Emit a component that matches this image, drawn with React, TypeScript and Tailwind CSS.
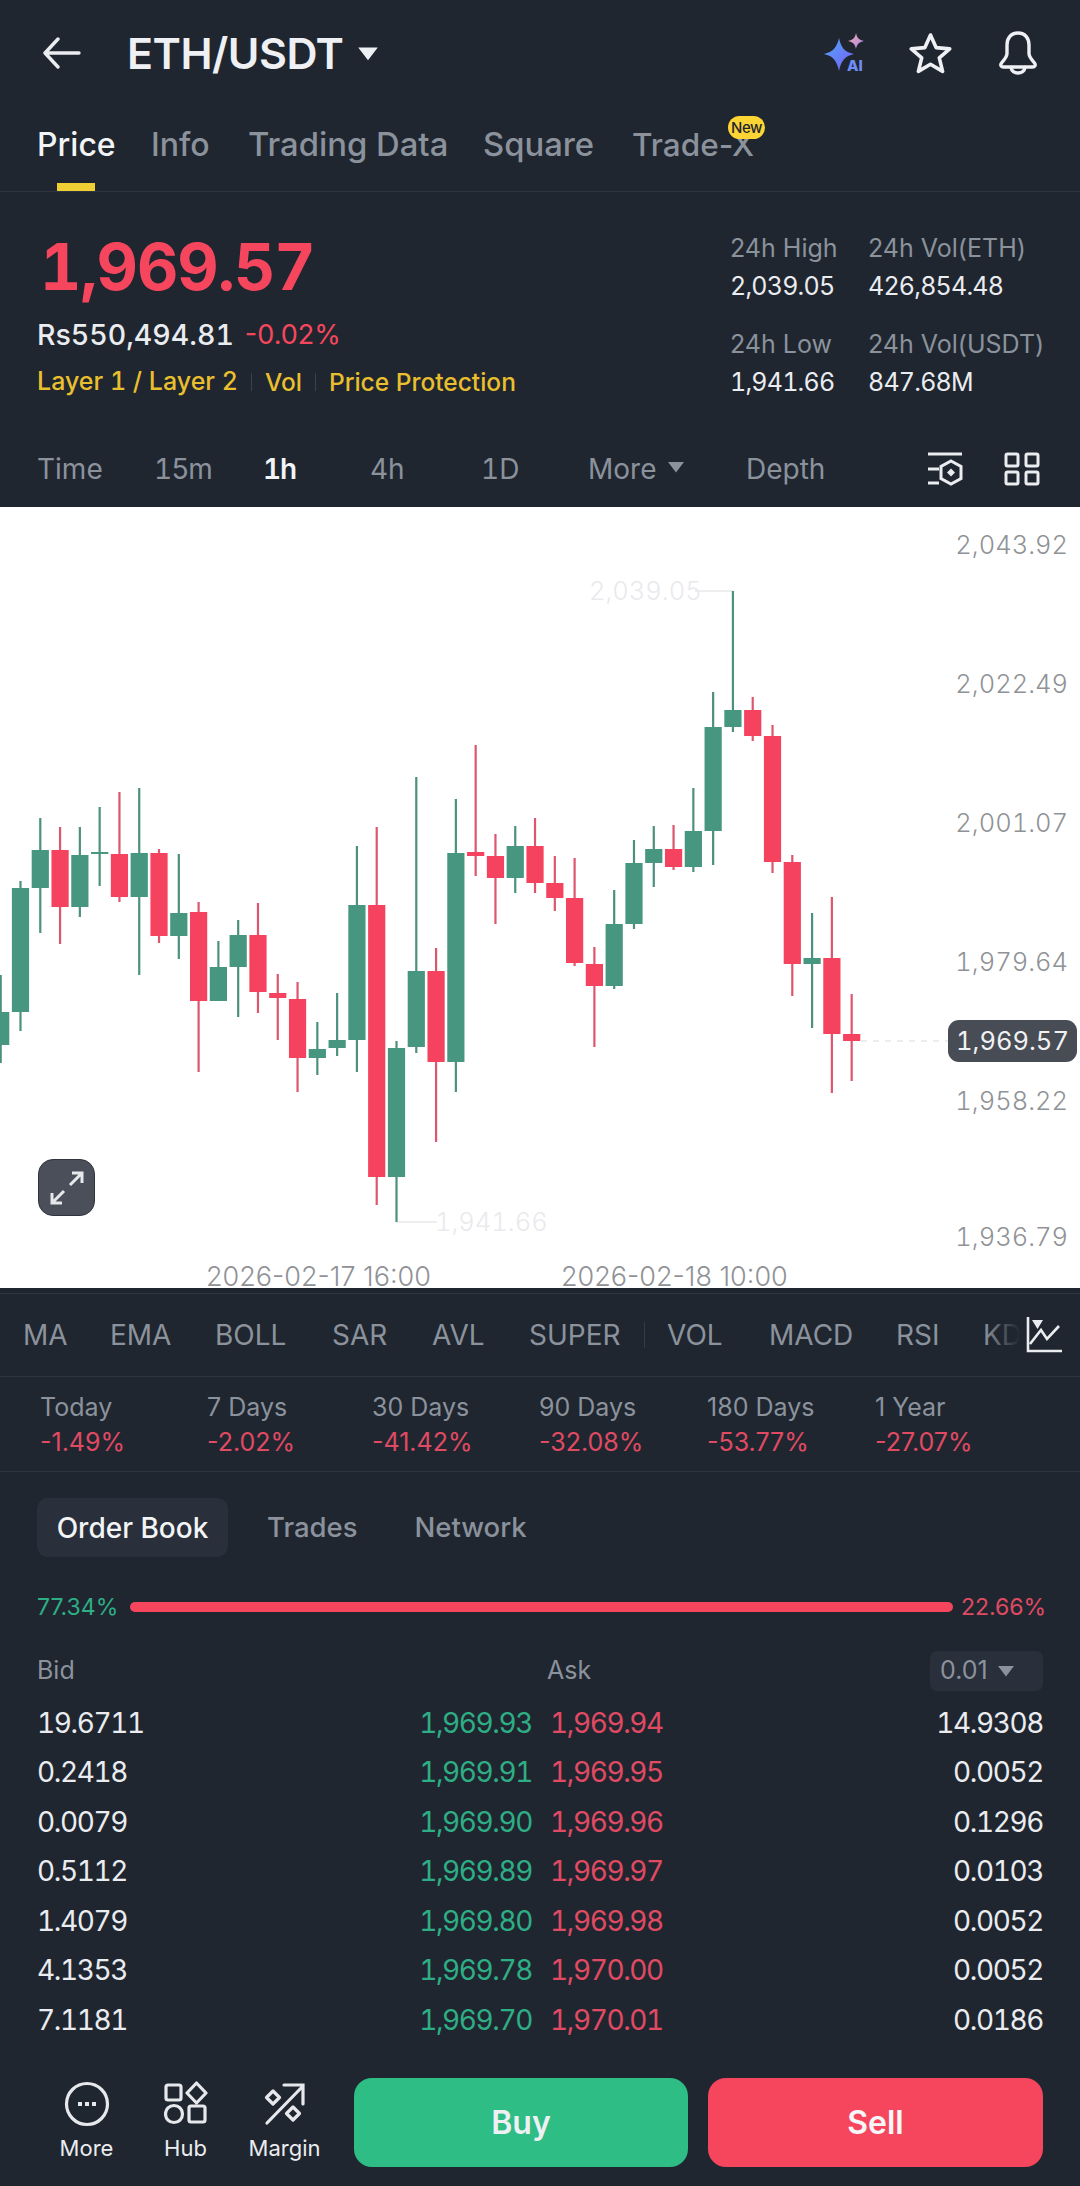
import React from "react";

type C = [string, number, number, number, number];
const candles: C[] = [
  ["g", 975, 1012, 1045, 1063],
  ["g", 881, 888, 1012, 1031],
  ["g", 818, 850, 888, 933],
  ["r", 827, 850, 907, 944],
  ["g", 827, 855, 907, 917],
  ["g", 807, 852, 854, 886],
  ["r", 792, 854, 897, 902],
  ["g", 788, 853, 897, 975],
  ["r", 849, 853, 936, 943],
  ["g", 854, 913, 936, 959],
  ["r", 902, 912, 1001, 1072],
  ["g", 941, 967, 1001, 1001],
  ["g", 920, 935, 967, 1017],
  ["r", 903, 935, 992, 1013],
  ["r", 974, 993, 998, 1040],
  ["r", 982, 999, 1058, 1092],
  ["g", 1022, 1049, 1058, 1075],
  ["g", 993, 1040, 1048, 1056],
  ["g", 846, 905, 1040, 1072],
  ["r", 827, 905, 1177, 1205],
  ["g", 1041, 1048, 1177, 1222],
  ["g", 777, 971, 1047, 1053],
  ["r", 948, 971, 1062, 1142],
  ["g", 799, 853, 1062, 1092],
  ["r", 745, 852, 856, 876],
  ["r", 834, 856, 878, 924],
  ["g", 826, 846, 878, 893],
  ["r", 818, 846, 883, 893],
  ["r", 856, 883, 898, 911],
  ["r", 858, 898, 963, 966],
  ["r", 947, 964, 986, 1047],
  ["g", 890, 924, 986, 989],
  ["g", 840, 863, 924, 929],
  ["g", 826, 849, 863, 887],
  ["r", 825, 849, 867, 870],
  ["g", 788, 831, 867, 872],
  ["g", 692, 727, 831, 865],
  ["g", 591, 710, 727, 732],
  ["r", 697, 710, 736, 741],
  ["r", 725, 736, 862, 873],
  ["r", 855, 862, 964, 996],
  ["g", 913, 958, 964, 1028],
  ["r", 897, 958, 1034, 1093],
  ["r", 994, 1034, 1041, 1081],
];

const CHART_TOP = 507;

function Chart() {
  return (
    <svg className="absolute inset-0" width="1080" height="781" viewBox={`0 ${CHART_TOP} 1080 781`}>
      <line x1="695" y1="591" x2="733" y2="591" stroke="#e6e8eb" strokeWidth="1.5" />
      <line x1="397" y1="1222" x2="437" y2="1222" stroke="#e6e8eb" strokeWidth="1.5" />
      <line x1="861" y1="1041" x2="948" y2="1041" stroke="#e6e8eb" strokeWidth="1.5" strokeDasharray="6 6" />
      {candles.map(([k, wt, bt, bb, wb], i) => {
        const x = 0.7 + i * 19.79;
        const wick = k === "g" ? "#4c917d" : "#dd566e";
        const body = k === "g" ? "#47967f" : "#f5425f";
        return (
          <g key={i}>
            <rect x={x - 1.1} y={wt} width="2.2" height={wb - wt} fill={wick} />
            <rect x={x - 8.6} y={bt} width="17.2" height={bb - bt} fill={body} />
          </g>
        );
      })}
    </svg>
  );
}

const axis: [string, string][] = [
  ["2,043.92", "top-[22px]"],
  ["2,022.49", "top-[161px]"],
  ["2,001.07", "top-[300px]"],
  ["1,979.64", "top-[439px]"],
  ["1,958.22", "top-[578px]"],
  ["1,936.79", "top-[714px]"],
];

const bookRows = [
  ["19.6711", "1,969.93", "1,969.94", "14.9308"],
  ["0.2418", "1,969.91", "1,969.95", "0.0052"],
  ["0.0079", "1,969.90", "1,969.96", "0.1296"],
  ["0.5112", "1,969.89", "1,969.97", "0.0103"],
  ["1.4079", "1,969.80", "1,969.98", "0.0052"],
  ["4.1353", "1,969.78", "1,970.00", "0.0052"],
  ["7.1181", "1,969.70", "1,970.01", "0.0186"],
];

const perf = [
  ["Today", "-1.49%", "w-[167px]"],
  ["7 Days", "-2.02%", "w-[165px]"],
  ["30 Days", "-41.42%", "w-[167px]"],
  ["90 Days", "-32.08%", "w-[168px]"],
  ["180 Days", "-53.77%", "w-[168px]"],
  ["1 Year", "-27.07%", "w-[160px]"],
];

const indicators = [
  ["MA", "w-[87px]"],
  ["EMA", "w-[105px]"],
  ["BOLL", "w-[117px]"],
  ["SAR", "w-[100px]"],
  ["AVL", "w-[97px]"],
  ["SUPER", "w-[115px]"],
];
const indicators2 = [
  ["VOL", "w-[102px]"],
  ["MACD", "w-[127px]"],
  ["RSI", "w-[87px]"],
  ["KDJ", "w-[60px]"],
];

function Tri({ className }: { className: string }) {
  return (
    <svg className={className} viewBox="0 0 18 12" fill="currentColor">
      <path d="M1 1h16L9 11.5z" strokeLinejoin="round" />
    </svg>
  );
}

export default function App() {
  return (
    <div className="w-[1080px] h-[2186px] overflow-hidden bg-[#1f2630] text-[#eaecef] font-['Inter','Noto_Sans',sans-serif]">
      {/* header */}
      <div className="h-[106px] flex items-center pl-[43px] pr-[42px]">
        <svg width="38" height="32" viewBox="0 0 38 32" fill="none" stroke="#eaecef" strokeWidth="3.4" strokeLinecap="round" strokeLinejoin="round">
          <path d="M36 16H3M15 2L2 16l13 14" />
        </svg>
        <span className="ml-[46px] text-[43px] font-semibold tracking-[-0.5px] text-[#eef0f3]">ETH/USDT</span>
        <Tri className="ml-[14px] w-[22px] h-[15px] text-[#eef0f3]" />
        <svg className="ml-auto" width="44" height="42" viewBox="-3 0 44 42">
          <defs>
            <linearGradient id="aiA" x1="0" y1="0" x2="1" y2="1">
              <stop offset="0" stopColor="#4fa8f8" />
              <stop offset="1" stopColor="#7a5cf5" />
            </linearGradient>
            <linearGradient id="aiB" x1="0" y1="0" x2="1" y2="1">
              <stop offset="0" stopColor="#f2a9a8" />
              <stop offset="1" stopColor="#a98af2" />
            </linearGradient>
          </defs>
          <path d="M16 6c2 9 5 14 15 16-9 2-13 7-15 17-2-10-6-15-15-17 9-2 13-7 15-16z" fill="url(#aiA)" />
          <path d="M33 1c1 5 3 7 8 8-5 1-7 3-8 8-1-5-3-7-8-8 5-1 7-3 8-8z" fill="url(#aiB)" />
          <text x="24" y="39" fontSize="15" fontWeight="800" fill="#6f8df5" fontFamily="Inter">AI</text>
        </svg>
        <svg className="ml-[45px]" width="43" height="42" viewBox="0 0 43 42" fill="none" stroke="#eef0f3" strokeWidth="3.6" strokeLinejoin="round">
          <path d="M21.5 3l5.6 12.6 13.6 1.3-10.4 9 3.3 13.5-12.1-7.2-12.1 7.2 3.3-13.5-10.4-9 13.6-1.3z" />
        </svg>
        <svg className="ml-[46px]" width="40" height="44" viewBox="0 0 40 44" fill="none" stroke="#eef0f3" strokeWidth="3.4" strokeLinejoin="round" strokeLinecap="round">
          <path d="M20 2c-7.500 0-11 5.600-11 12v8.500c0 3-2 5.500-5.500 9.500-1.500 2-.5 4 2 4h29c2.500 0 3.500-2 2-4-3.500-4-5.500-6.500-5.500-9.500V14c0-6.400-3.500-12-11-12z" />
          <path d="M13 36.500c.5 3.500 3.500 5.500 7 5.500s6.500-2 7-5.500" />
        </svg>
      </div>

      {/* tabs */}
      <div className="h-[86px] border-b border-[#2f3640] relative">
        <div className="flex items-center h-[78px] pl-[37px] text-[32px] font-medium text-[#8b929c]">
          <span className="w-[114px] text-[#f3f4f6]">Price</span>
          <span className="w-[97px]">Info</span>
          <span className="w-[235px] text-[32.8px]">Trading Data</span>
          <span className="w-[149px] text-[32.8px]">Square</span>
          <span className="relative text-[31.5px]">
            Trade-X
            <span className="absolute left-[96px] -top-[5px] w-[37px] h-[23px] rounded-full bg-[#fcd535] text-[#1f2630] text-[15px] font-medium flex items-center justify-center tracking-[-0.5px]">New</span>
          </span>
        </div>
        <div className="absolute left-[57px] bottom-0 w-[38px] h-[8px] bg-[#f0cf35]" />
      </div>

      {/* stats */}
      <div className="h-[239px] px-[37px] flex justify-between">
        <div className="pt-[43px]">
          <div className="ml-[3px] h-[64px] leading-[64px] text-[64px] font-bold tabular-nums tracking-[-1px] text-[#f6465d]">1,969.57</div>
          <div className="mt-[16px] h-[40px] flex items-center text-[28.5px]">
            <span className="font-medium tabular-nums">Rs550,494.81</span>
            <span className="ml-[11px] text-[27px] text-[#f6465d]">-0.02%</span>
          </div>
          <div className="mt-[7px] h-[40px] flex items-center text-[24.5px] font-medium text-[#e9bf2e]">
            <span className="text-[25px] tabular-nums">Layer 1 / Layer 2</span>
            <span className="mx-[13px] w-px h-[18px] bg-[#3a414c]" />
            <span>Vol</span>
            <span className="mx-[13px] w-px h-[18px] bg-[#3a414c]" />
            <span>Price Protection</span>
          </div>
        </div>
        <div className="flex pt-[38px] text-[25px]">
          <div className="w-[138px]">
            <div className="h-[36px] leading-[36px] text-[#8b929c]">24h High</div>
            <div className="mt-[2px] h-[36px] leading-[36px] tabular-nums tracking-[-0.8px]">2,039.05</div>
            <div className="mt-[22px] h-[36px] leading-[36px] text-[#8b929c]">24h Low</div>
            <div className="mt-[2px] h-[36px] leading-[36px] tabular-nums tracking-[-0.8px]">1,941.66</div>
          </div>
          <div className="w-[175px] whitespace-nowrap">
            <div className="h-[36px] leading-[36px] text-[#8b929c]">24h Vol(ETH)</div>
            <div className="mt-[2px] h-[36px] leading-[36px] tabular-nums tracking-[-0.8px]">426,854.48</div>
            <div className="mt-[22px] h-[36px] leading-[36px] text-[#8b929c]">24h Vol(USDT)</div>
            <div className="mt-[2px] h-[36px] leading-[36px] tabular-nums tracking-[-0.8px]">847.68M</div>
          </div>
        </div>
      </div>

      {/* timeframe */}
      <div className="h-[76px] flex items-center pl-[37px] pr-[40px] text-[28px] text-[#8b929c]">
        <span className="w-[117px]">Time</span>
        <span className="w-[109px] tabular-nums tracking-[-1px]">15m</span>
        <span className="w-[107px] font-semibold tabular-nums tracking-[-1px] text-[#f3f4f6]">1h</span>
        <span className="w-[111px]">4h</span>
        <span className="w-[107px] tabular-nums">1D</span>
        <span className="w-[158px] flex items-center">
          More
          <Tri className="ml-[11px] w-[18px] h-[12px] -mt-[4px]" />
        </span>
        <span>Depth</span>
        <svg className="ml-auto" width="36" height="34" viewBox="0 0 36 34" fill="none" stroke="#eaecef" strokeWidth="3">
          <path d="M1 2h34M1 17h11M1 31h11" />
          <path d="M24 9l10 5.500v12L24 32l-10-5.500v-12z" />
          <path d="M24 16.500l4 4-4 4-4-4z" fill="#eaecef" stroke="none" />
        </svg>
        <svg className="ml-[41px]" width="36" height="34" viewBox="0 0 36 34" fill="none" stroke="#eaecef" strokeWidth="3">
          <rect x="2" y="2" width="12" height="12" rx="1.500" />
          <rect x="22" y="2" width="12" height="12" rx="1.500" />
          <rect x="2" y="20" width="12" height="12" rx="1.500" />
          <rect x="22" y="20" width="12" height="12" rx="1.500" />
        </svg>
      </div>

      {/* chart */}
      <div className="relative h-[781px] bg-white overflow-hidden text-[25.5px] tabular-nums text-[#8f9296] font-light">
        <Chart />
        {axis.map(([t, pos]) => (
          <div key={t} className={`absolute right-[12px] h-[32px] leading-[32px] ${pos}`}>{t}</div>
        ))}
        <div className="absolute left-[589px] top-[68px] h-[32px] leading-[32px] text-[#e8eaed]">2,039.05</div>
        <div className="absolute left-[435px] top-[699px] h-[32px] leading-[32px] text-[#e8eaed]">1,941.66</div>
        <div className="absolute left-[206px] top-[759px] h-[22px] leading-[22px] text-[27px] [font-variant-numeric:normal]">2026-02-17 16:00</div>
        <div className="absolute left-[561px] top-[759px] h-[22px] leading-[22px] text-[27px] [font-variant-numeric:normal]">2026-02-18 10:00</div>
        <div className="absolute left-[948px] top-[513px] w-[129px] h-[42px] rounded-[11px] bg-[#474c55] text-[#f0f1f3] font-normal flex items-center justify-center">1,969.57</div>
        <div className="absolute left-[38px] top-[652px] w-[57px] h-[57px] rounded-[15px] bg-[#4a4f59] border border-[#30343c] flex items-center justify-center">
          <svg width="36" height="36" viewBox="0 0 36 36" fill="none" stroke="#e6e8ec" strokeWidth="3">
            <path d="M21 15L33 3M23 3h10v10M15 21L3 33M13 33H3V23" />
          </svg>
        </div>
      </div>

      {/* indicators */}
      <div className="h-[5px]" />
      <div className="h-[84px] border-y border-[#2f3640] flex items-center text-[28px] text-[#8b929c]">
        <div className="relative w-[1020px] overflow-hidden pl-[23px] flex items-center whitespace-nowrap">
          {indicators.map(([t, w]) => (
            <span key={t} className={`shrink-0 ${w}`}>{t}</span>
          ))}
          <span className="shrink-0 w-px h-[26px] bg-[#343b46] mr-[22px]" />
          {indicators2.map(([t, w]) => (
            <span key={t} className={`shrink-0 ${w}`}>{t}</span>
          ))}
          <span className="absolute right-0 top-0 bottom-0 w-[36px] bg-gradient-to-r from-transparent to-[#1f2630]" />
        </div>
        <svg className="ml-[6px]" width="36" height="36" viewBox="0 0 36 36" fill="none" stroke="#eaecef" strokeWidth="2.6">
          <path d="M2 0v34h34" />
          <path d="M4 27l11-14 6 9 12-13" />
          <path d="M6 3h11l-5.500 9z" fill="#eaecef" stroke="none" />
        </svg>
      </div>

      {/* performance */}
      <div className="h-[95px] border-b border-[#2f3640] pl-[40px] pt-[12px] flex text-[25px]">
        {perf.map(([a, b, w]) => (
          <div key={a} className={w}>
            <div className="h-[36px] leading-[36px] text-[#8b929c]">{a}</div>
            <div className="h-[35px] leading-[35px] text-[#e04a63]">{b}</div>
          </div>
        ))}
      </div>

      {/* order book tabs */}
      <div className="mt-[26px] ml-[37px] flex items-center h-[59px] text-[28px] font-medium text-[#8b929c]">
        <span className="w-[191px] h-[59px] rounded-[11px] bg-[#292f3b] text-[#f3f4f6] flex items-center justify-center">Order Book</span>
        <span className="ml-[39px] text-[27.5px]">Trades</span>
        <span className="ml-[57px] text-[27.5px]">Network</span>
      </div>

      {/* ratio */}
      <div className="mt-[35px] h-[30px] px-[37px] flex items-center text-[23px] whitespace-nowrap">
        <span className="shrink-0 text-[#2eae85] w-[93px]">77.34%</span>
        <span className="shrink-0 w-[823px] h-[10px] rounded-full bg-[#f6465d]" />
        <span className="shrink-0 ml-[8px] text-[#e04a63]">22.66%</span>
      </div>

      {/* book head */}
      <div className="mt-[29px] h-[40px] pl-[37px] pr-[37px] flex items-center text-[25px] text-[#8b929c]">
        <span className="w-[510px]">Bid</span>
        <span>Ask</span>
        <span className="ml-auto w-[113px] h-[40px] rounded-[7px] bg-[#292f3b] flex items-center pl-[10px]">
          0.01
          <Tri className="ml-[9px] w-[18px] h-[12px]" />
        </span>
      </div>

      {/* rows */}
      <div className="mt-[7px] text-[28px] tabular-nums tracking-[-1.4px] px-[37px]">
        {bookRows.map(([a, b, c, d]) => (
          <div key={a} className="h-[49.5px] flex items-center">
            <div className="w-[495px] flex justify-between">
              <span>{a}</span>
              <span className="text-[#2eae85]">{b}</span>
            </div>
            <span className="ml-[18px] text-[#e04a63]">{c}</span>
            <span className="ml-auto">{d}</span>
          </div>
        ))}
      </div>

      {/* bottom */}
      <div className="mt-[33px] h-[89px] flex pr-[37px]">
        <div className="w-[354px] flex pl-[37px]">
          <div className="w-[99px] flex flex-col items-center">
            <svg width="46" height="46" viewBox="0 0 46 46" fill="none" stroke="#e6e8ec" strokeWidth="3.2" className="mt-[3px]">
              <circle cx="23" cy="23" r="20.500" />
              <path d="M14 21h4v4h-4zM21 21h4v4h-4zM28 21h4v4h-4z" fill="#e6e8ec" stroke="none" />
            </svg>
            <span className="mt-[5px] text-[22px] leading-[32px]">More</span>
          </div>
          <div className="w-[99px] flex flex-col items-center">
            <svg width="44" height="46" viewBox="0 0 44 46" fill="none" stroke="#e6e8ec" strokeWidth="3.2" className="mt-[3px]">
              <rect x="2" y="4" width="15" height="15" rx="2" />
              <path d="M32.500 2l9.500 10-9.500 10-9.500-10z" strokeLinejoin="round" />
              <circle cx="10" cy="33" r="8.500" />
              <rect x="25" y="25" width="16" height="16" rx="2" />
            </svg>
            <span className="mt-[5px] text-[22px] leading-[32px]">Hub</span>
          </div>
          <div className="w-[99px] flex flex-col items-center">
            <svg width="44" height="46" viewBox="0 0 44 46" fill="none" stroke="#e6e8ec" strokeWidth="3.2" className="mt-[3px]" strokeLinecap="round">
              <path d="M4 42L40 5M21 4h19v19" />
              <path d="M10 10l6.500 6.500L10 23l-6.500-6.500z" strokeLinejoin="round" />
              <path d="M30 26l6.500 6.500L30 39l-6.500-6.500z" strokeLinejoin="round" />
            </svg>
            <span className="mt-[5px] text-[22px] leading-[32px]">Margin</span>
          </div>
        </div>
        <div className="w-[334px] h-[89px] pt-[2px] rounded-[18px] bg-[#2ebd85] flex items-center justify-center text-[32px] font-semibold text-[#eef0f3]">Buy</div>
        <div className="ml-[20px] w-[335px] h-[89px] pt-[2px] rounded-[18px] bg-[#f6465d] flex items-center justify-center text-[32px] font-semibold text-[#f6f7f8]">Sell</div>
      </div>
    </div>
  );
}
